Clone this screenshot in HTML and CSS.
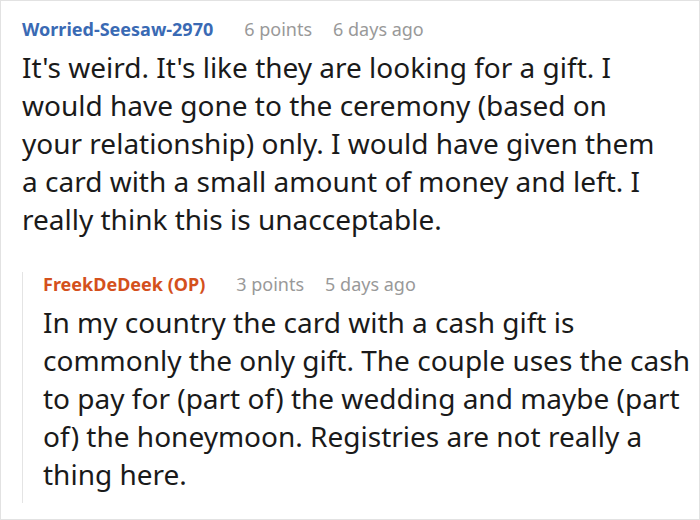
FILE: index.html
```
<!DOCTYPE html>
<html>
<head>
<meta charset="utf-8">
<link rel="stylesheet" href="styles.css">
</head>
<body>
<div class="frame">
  <div class="comment">
    <div class="meta">
      <span class="author">Worried-Seesaw-2970</span>
      <span class="points">6 points</span>
      <span class="time">6 days ago</span>
    </div>
    <p class="body main-body">It's weird. It's like they are looking for a gift. I would have gone to the ceremony (based on your relationship) only. I would have given them a card with a small amount of money and left. I really think this is unacceptable.</p>
  </div>
  <div class="thread">
    <div class="comment reply">
      <div class="meta">
        <span class="author op">FreekDeDeek (OP)</span>
        <span class="points">3 points</span>
        <span class="time">5 days ago</span>
      </div>
      <p class="body">In my country the card with a cash gift is commonly the only gift. The couple uses the cash to pay for (part of) the wedding and maybe (part of) the honeymoon. Registries are not really a thing here.</p>
    </div>
  </div>
</div>
</body>
</html>
```
FILE: styles.css
```
html, body {
  margin: 0;
  padding: 0;
  background: #ffffff;
}
.frame {
  box-sizing: border-box;
  width: 700px;
  height: 520px;
  border: 1px solid #e2e2e2;
  padding: 16px 3px 0 21px;
  font-family: "Noto Sans", "Open Sans", sans-serif;
  color: #1a1a1a;
  overflow: hidden;
}
.meta {
  display: flex;
  align-items: baseline;
  font-size: 18px;
  line-height: 24px;
  white-space: nowrap;
}
.author {
  font-weight: bold;
  color: #3a6ab4;
  margin-right: 31px;
}
.author.op {
  color: #d4501c;
}
.points,
.time {
  color: #999999;
}
.points {
  margin-right: 21px;
}
.body {
  margin: 7px 0 0 0;
  font-size: 28px;
  line-height: 38px;
}
.main-body {
  margin-right: 30px;
}
.thread {
  margin-top: 46px;
  border-left: 1px solid #e4e4e4;
  padding-bottom: 10px;
}
.reply {
  margin-top: -12px;
  padding-left: 20px;
}
```
